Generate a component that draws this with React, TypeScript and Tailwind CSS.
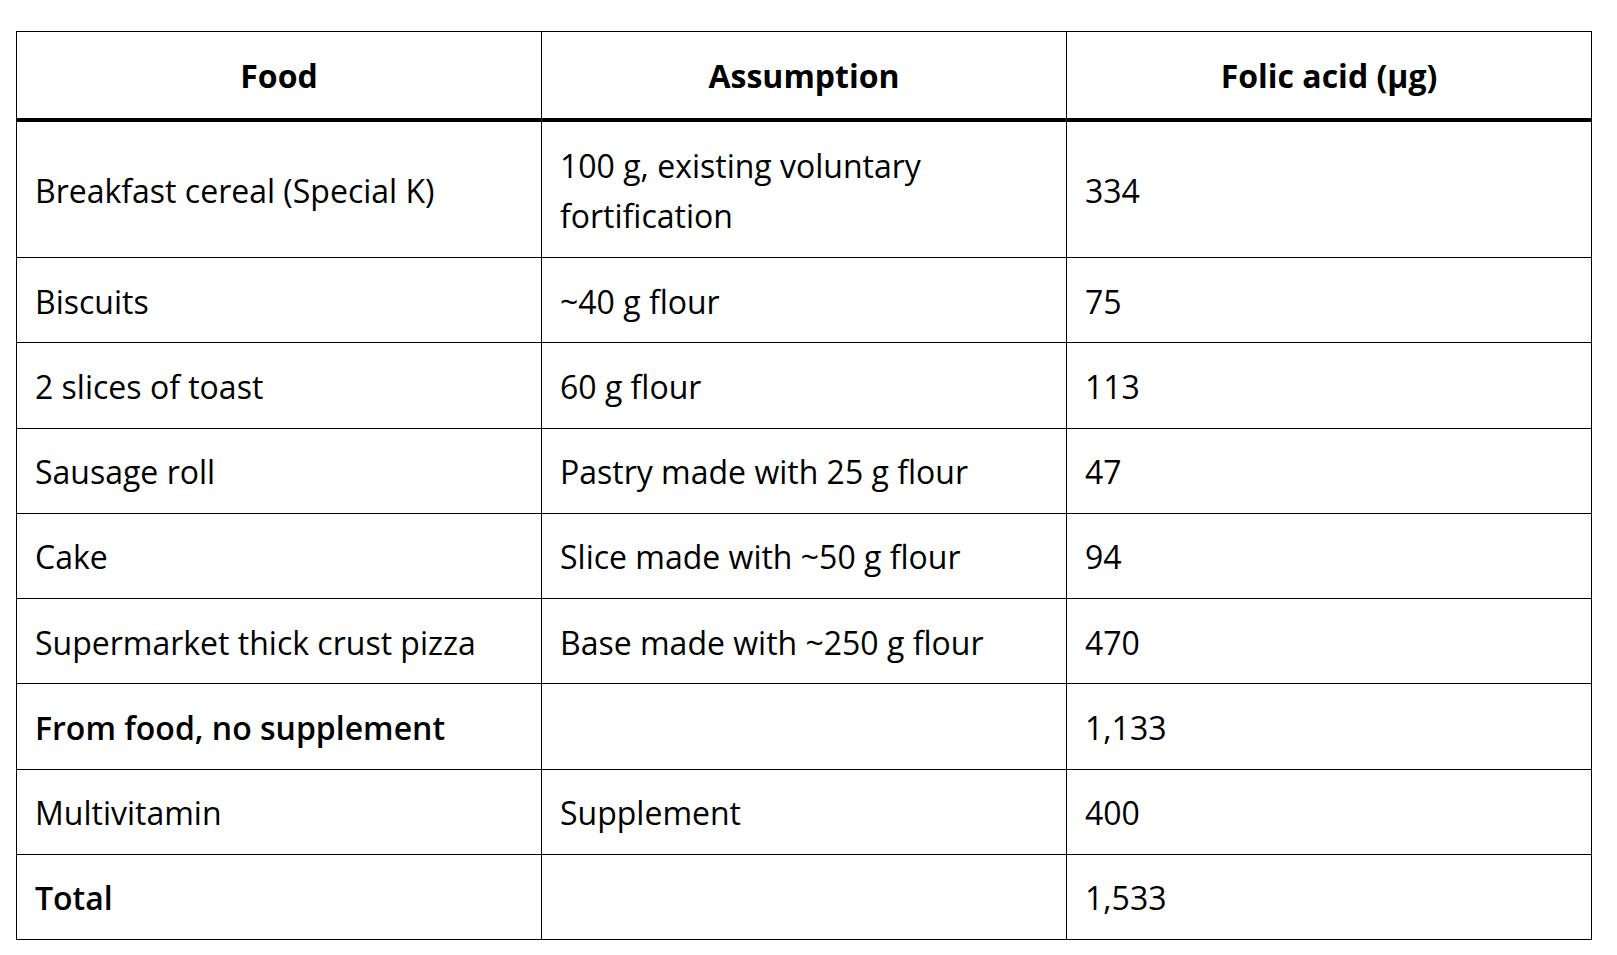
import React from 'react';

type Row = {
  food: string;
  assumption: string;
  folic: string;
  bold?: boolean;
  tall?: boolean;
};

const rows: Row[] = [
  { food: 'Breakfast cereal (Special K)', assumption: '100 g, existing voluntary fortification', folic: '334', tall: true },
  { food: 'Biscuits', assumption: '~40 g flour', folic: '75' },
  { food: '2 slices of toast', assumption: '60 g flour', folic: '113' },
  { food: 'Sausage roll', assumption: 'Pastry made with 25 g flour', folic: '47' },
  { food: 'Cake', assumption: 'Slice made with ~50 g flour', folic: '94' },
  { food: 'Supermarket thick crust pizza', assumption: 'Base made with ~250 g flour', folic: '470' },
  { food: 'From food, no supplement', assumption: '', folic: '1,133', bold: true },
  { food: 'Multivitamin', assumption: 'Supplement', folic: '400' },
  { food: 'Total', assumption: '', folic: '1,533', bold: true },
];

const cell = 'border border-black px-[18px] pt-[3px] align-middle text-left';

const App: React.FC = () => {
  return (
    <div className="min-h-screen bg-white pt-[31px] pl-[16px] font-['Open_Sans',sans-serif] text-[32px] leading-[50px] text-black">
      <table className="w-[1576px] table-fixed border-collapse">
        <thead>
          <tr className="h-[88px] border-b-4 border-black">
            <th className="border border-black pt-[2px] font-bold text-center">Food</th>
            <th className="border border-black pt-[2px] font-bold text-center">Assumption</th>
            <th className="border border-black pt-[2px] font-bold text-center">Folic acid (µg)</th>
          </tr>
        </thead>
        <tbody>
          {rows.map((r) => (
            <tr key={r.food} className={r.tall ? 'h-[138px]' : 'h-[85.25px]'}>
              <td className={`${cell} ${r.bold ? 'font-semibold' : ''}`}>{r.food}</td>
              <td className={`${cell} ${r.tall ? 'pr-[40px]' : ''}`}>{r.assumption}</td>
              <td className={cell}>{r.folic}</td>
            </tr>
          ))}
        </tbody>
      </table>
    </div>
  );
};

export default App;
